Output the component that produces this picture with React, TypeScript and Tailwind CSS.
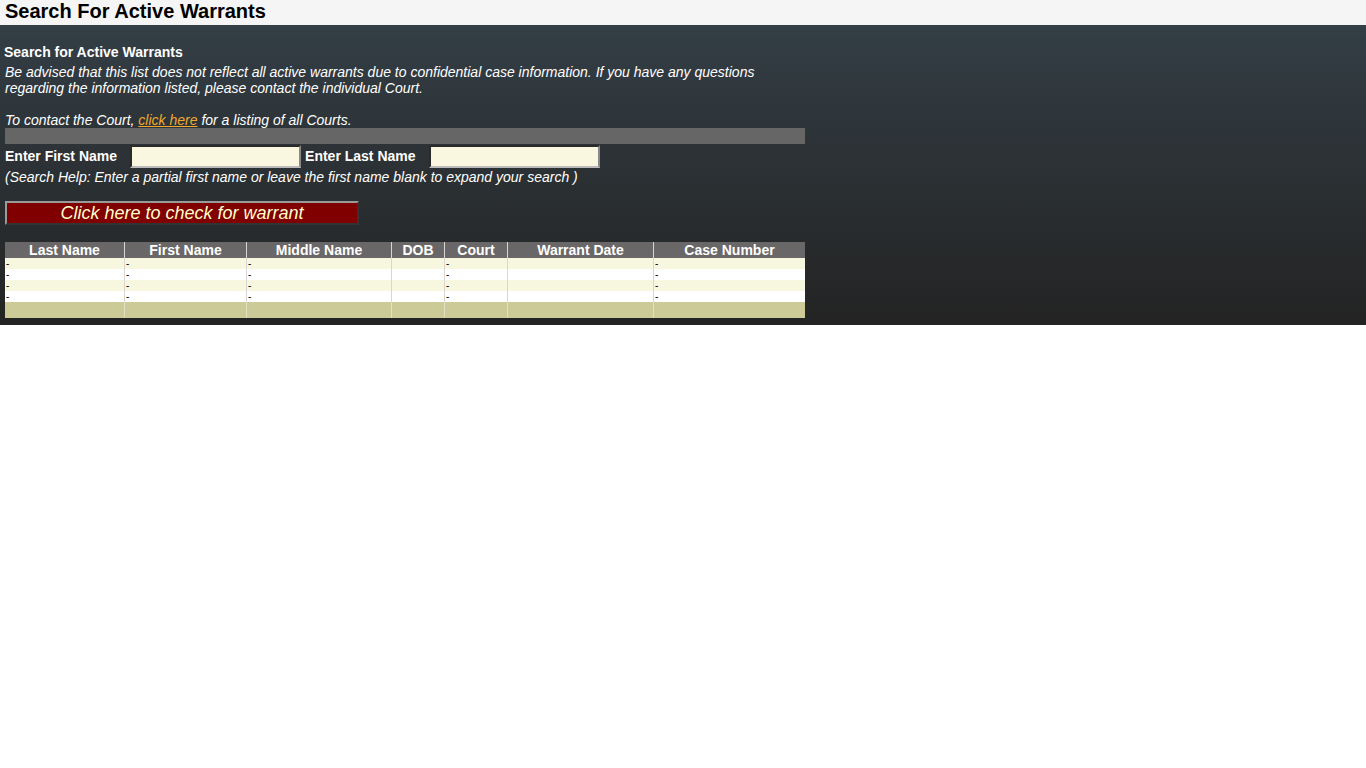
import React from "react";

const columns = [
  { label: "Last Name", width: 119, dash: true },
  { label: "First Name", width: 122, dash: true },
  { label: "Middle Name", width: 145, dash: true },
  { label: "DOB", width: 53, dash: false },
  { label: "Court", width: 63, dash: true },
  { label: "Warrant Date", width: 146, dash: false },
  { label: "Case Number", width: 152, dash: true },
];

const gridCols = "grid grid-cols-[119px_122px_145px_53px_63px_146px_152px]";

function ResultsTable() {
  const rows = [0, 1, 2, 3];
  return (
    <div className="w-[800px] ml-[5px] mt-[16px]">
      <div className={`${gridCols} h-[16px] bg-[#6a6768]`}>
        {columns.map((c, i) => (
          <div
            key={c.label}
            className={`text-center text-white font-bold text-[14px] leading-[16px] ${i > 0 ? "border-l border-[#d6d6d6]" : ""}`}
          >
            {c.label}
          </div>
        ))}
      </div>
      {rows.map((r) => (
        <div key={r} className={`${gridCols} h-[11px] ${r % 2 === 0 ? "bg-[#f7f6df]" : "bg-white"}`}>
          {columns.map((c, i) => (
            <div
              key={c.label}
              className={`text-black text-[10px] leading-[11px] pl-[1px] ${i > 0 ? "border-l border-[#d6d6d6]" : ""}`}
            >
              {c.dash ? "-" : ""}
            </div>
          ))}
        </div>
      ))}
      <div className={`${gridCols} h-[16px] bg-[#cccb98]`}>
        {columns.map((c, i) => (
          <div key={c.label} className={i > 0 ? "border-l border-[#e2e1c4]" : ""} />
        ))}
      </div>
    </div>
  );
}

export default function App() {
  return (
    <div className="w-[1366px] font-['Liberation_Sans',Arial,sans-serif]">
      <div className="h-[25px] bg-[#f5f5f5] pl-[5px]">
        <h1 className="text-[20px] font-bold leading-[23px] text-black">Search For Active Warrants</h1>
      </div>
      <div className="h-[300px] bg-gradient-to-b from-[#333e45] to-[#232323] pt-[19px]">
        <div className="pl-[4px] text-[14px] font-bold leading-[16px] text-white mb-[4px]">
          Search for Active Warrants
        </div>
        <div className="w-[800px] pl-[5px] text-[14px] italic leading-[16px] text-white">
          <p>
            Be advised that this list does not reflect all active warrants due to confidential case information. If you have any questions regarding the information listed, please contact the individual Court.
          </p>
          <p className="h-[16px]" />
          <p>
            To contact the Court,{" "}
            <a href="#" className="text-[#f0a830] underline">
              click here
            </a>{" "}
            for a listing of all Courts.
          </p>
        </div>
        <div className="ml-[5px] h-[16px] w-[800px] bg-[#666666]" />
        <div className="flex items-center h-[24px] pl-[5px] text-[14px] font-bold text-white">
          <span>Enter First Name</span>
          <input
            className="ml-[13px] h-[23px] w-[171px] bg-[#f9f7df] border-2 border-t-[#2a2a2a] border-l-[#2a2a2a] border-r-[#888] border-b-[#bbb] outline-none"
            type="text"
          />
          <span className="ml-[4px]">Enter Last Name</span>
          <input
            className="ml-[13px] h-[23px] w-[171px] bg-[#f9f7df] border-2 border-t-[#2a2a2a] border-l-[#2a2a2a] border-r-[#888] border-b-[#bbb] outline-none"
            type="text"
          />
        </div>
        <div className="pl-[5px] mt-[1px] text-[14px] italic leading-[16px] text-white">
          (Search Help: Enter a partial first name or leave the first name blank to expand your search )
        </div>
        <button
          type="button"
          className="ml-[5px] mt-[16px] h-[24px] w-[354px] bg-[#800000] border-2 border-t-[#9a9a9a] border-l-[#9a9a9a] border-r-[#333] border-b-[#333] text-[18px] italic leading-[20px] text-[#ffffcc] font-['Liberation_Sans',Arial,sans-serif]"
        >
          Click here to check for warrant
        </button>
        <ResultsTable />
      </div>
    </div>
  );
}
